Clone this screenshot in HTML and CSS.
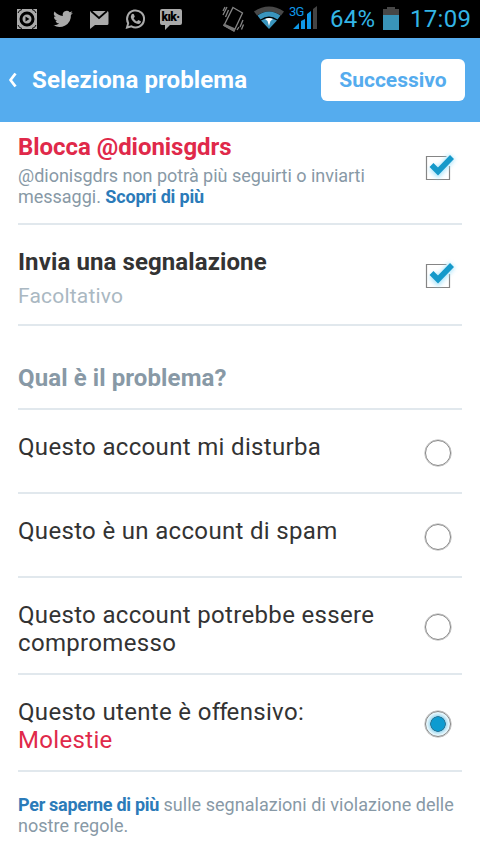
FILE: index.html
```html
<!DOCTYPE html>
<html lang="it">
<head>
<meta charset="utf-8">
<title>Seleziona problema</title>
<link rel="stylesheet" href="styles.css">
</head>
<body>
<div class="status">
  <svg class="notices" width="190" height="38" viewBox="0 0 190 38">
    <path fill="#aaa" d="M17 9h20v20H17z"/>
    <circle cx="27" cy="19" r="9" fill="#aaa"/>
    <circle cx="27" cy="19" r="6" fill="none" stroke="#000" stroke-width="3"/>
    <path fill="#000" d="M25.500 16.500l4 2.500-4 2.500z"/>
    <path fill="none" stroke="#000" stroke-width="1" d="M18 13q1-3 4-3.500M32 9.500q3 .5 4 3.500M18 25q1 3 4 3.500M32 28.500q3-.5 4-3.500"/>
    <path fill="#aaa" transform="translate(53.500 9) scale(.82)" d="M23.600 4.600a9.800 9.800 0 0 1-2.800.8 4.900 4.900 0 0 0 2.100-2.700 9.600 9.600 0 0 1-3.100 1.200 4.900 4.900 0 0 0-8.400 4.500A13.900 13.900 0 0 1 1.300 3.200a4.900 4.900 0 0 0 1.500 6.600 4.900 4.900 0 0 1-2.200-.6 4.900 4.900 0 0 0 3.900 4.900 4.900 4.900 0 0 1-2.200.1 4.900 4.900 0 0 0 4.600 3.400A9.900 9.900 0 0 1-.3 19.600a13.900 13.900 0 0 0 21.500-12.400 10 10 0 0 0 2.400-2.600z"/>
    <path fill="#aaa" d="M91 11h16q1.500 0 1.500 1.500v11q0 1.500-1.500 1.500H95l-5 4V12q0-1 1-1z"/>
    <path fill="none" stroke="#000" stroke-width="1.700" d="M91 11l8 7 8-7"/>
    <path fill="none" stroke="#aaa" stroke-width="2" d="M127 27.500l1.200-4.300a8.500 8.500 0 1 1 3.300 3.200z"/>
    <path fill="#aaa" d="M131.500 14.600q1.500-1.500 2.500 0l.8 2.200-1.200 1.400q1.200 2.300 3.300 3.200l1.400-1.500 2.600 1.300q.2 2.400-2.700 2.700-3.900 0-6.700-4.600-1.300-2.700 0-4.700z"/>
    <path fill="#aaa" d="M162 9h18q2 0 2 2v12q0 2-2 2h-10l-5 5v-5h-3q-2 0-2-2V11q0-2 2-2z"/>
    <text class="kik" x="161.500" y="21">kık·</text>
  </svg>
  <svg class="system" width="112" height="38" viewBox="218 0 112 38">
    <g fill="none" stroke="#858585" stroke-width="1.300">
      <path d="M233 7.500l9.500 5.500-8.500 18-10-5.500z"/>
      <path d="M223 15l4-8M225.500 17l3-7M240 27l3-7M241.500 29.500l2-5M223 11l2-4M237 30l2-3"/>
    </g>
    <path fill="#777" d="M224 23.500l11.500 5-1.500 3-11-6z"/>
    <path fill="#484848" d="M254 11.500q15-10 30 0l-3 4q-12-8-24 0z"/>
    <path fill="#3994bd" d="M257.500 15.500q11.500-8 23 0l-3 4q-8.500-6-17 0z"/>
    <path fill="#3994bd" d="M261 20.500q8-5 16 0L269 29z"/>
    <path fill="#fff" d="M265 19q4-2 8 0l-2.500 2-1.500 5-1.500-5z"/>
    <text class="net" x="289" y="16">3G</text>
    <path fill="#0f98e6" d="M293 29l6-6v6zM301 21l4-2v10h-4zM307 14l4-3v18h-4z"/>
    <path fill="#444" d="M313 9l4-3v23h-4z"/>
  </svg>
  <span class="pct">64%</span>
  <svg class="battery" width="16" height="24" viewBox="0 0 16 24"><path fill="#474747" d="M4 0h8v2h4v6H0V2h4z"/><path fill="#3994b9" d="M0 8h16v15H0z"/></svg>
  <span class="clock">17:09</span>
</div>
<header class="bar">
  <svg class="back" width="10" height="16" viewBox="0 0 10 16"><path d="M8.500 1.500L3.500 8L8.500 14.500" fill="none" stroke="#fff" stroke-width="2.800" stroke-linejoin="round"/></svg>
  <h1>Seleziona problema</h1>
  <button class="next">Successivo</button>
</header>
<main>
  <section class="row block">
    <div class="text">
      <h2 class="red">Blocca @dionisgdrs</h2>
      <p class="note">@dionisgdrs non potrà più seguirti o inviarti<br>messaggi. <a>Scopri di più</a></p>
    </div>
    <svg class="check" width="36" height="36" viewBox="0 0 36 36"><defs><filter id="g" x="-50%" y="-50%" width="200%" height="200%"><feGaussianBlur stdDeviation="2"/></filter></defs><path d="M22.500 8.500h-20v23h23V18" fill="none" stroke="#858585" stroke-width="1.200"/><path d="M8 19l6 6L28 9" fill="none" stroke="#9ce0fa" stroke-width="8" opacity=".8" filter="url(#g)"/><path d="M7.500 17l6.500 6.500L28 9" fill="none" stroke="#1599ca" stroke-width="5.500"/></svg>
  </section>
  <section class="row report">
    <div class="text">
      <h2>Invia una segnalazione</h2>
      <p class="optional">Facoltativo</p>
    </div>
    <svg class="check" width="36" height="36" viewBox="0 0 36 36"><path d="M22.500 8.500h-20v23h23V18" fill="none" stroke="#858585" stroke-width="1.200"/><path d="M8 19l6 6L28 9" fill="none" stroke="#9ce0fa" stroke-width="8" opacity=".8" filter="url(#g)"/><path d="M7.500 17l6.500 6.500L28 9" fill="none" stroke="#1599ca" stroke-width="5.500"/></svg>
  </section>
  <section class="row heading"><h2>Qual è il problema?</h2></section>
  <section class="row option"><p>Questo account mi disturba</p><i class="radio"></i></section>
  <section class="row option"><p>Questo è un account di spam</p><i class="radio"></i></section>
  <section class="row option tall"><p>Questo account potrebbe essere<br>compromesso</p><i class="radio"></i></section>
  <section class="row option tall"><p>Questo utente è o<span class="tight">ff</span>ensivo:<br><span class="red">Molestie</span></p><i class="radio on"></i></section>
  <p class="note foot"><a>Per saperne di più</a> sulle segnalazioni di violazione delle<br>nostre regole.</p>
</main>
</body>
</html>
```
FILE: styles.css
```css
* { box-sizing: border-box; }
body { margin: 0; width: 480px; height: 854px; overflow: hidden; background: #fff; color: #333; font-family: Roboto, "Liberation Sans", sans-serif; }
h1, h2, p { margin: 0; }
.status { height: 38px; background: #000; display: flex; color: #33b5e5; font-size: 24px; line-height: 39px; }
.notices { flex: none; margin-right: 28px; }
.kik { font: 900 12px Roboto, sans-serif; fill: #000; letter-spacing: -.6px; }
.system { flex: none; }
.net { font: 13px Roboto, sans-serif; fill: #0f98e6; letter-spacing: -.8px; }
.pct { width: 53px; letter-spacing: .2px; }
.battery { flex: none; margin: 7px 11px 0 0; }
.clock { letter-spacing: .3px; }
.bar { height: 84px; background: #55acee; display: flex; align-items: center; padding: 0 15px 0 7px; }
.back { margin-right: 15px; }
h1, h2 { font-size: 24px; line-height: 28px; font-weight: 700; white-space: nowrap; letter-spacing: .1px; }
h1 { color: #fff; flex: 1; }
.block h2 { letter-spacing: -.05px; }
.next { width: 144px; height: 42px; border: 0; padding: 0; border-radius: 6px; background: #fff; color: #55acee; font: 700 21px/42px Roboto, sans-serif; }
main { padding: 0 18px; }
.row { display: flex; justify-content: space-between; border-bottom: 2px solid #e1e8ed; }
.block { height: 103px; padding-top: 11px; }
.report { height: 101px; padding-top: 23px; }
.heading { height: 84px; padding-top: 38px; color: #8899a6; }
.option { height: 84px; padding-top: 23px; font-size: 24px; line-height: 28px; white-space: nowrap; letter-spacing: .33px; }
.option.tall { height: 97px; }
.tight { letter-spacing: -.9px; }
.red { color: #e0294a; }
.note { font-size: 18px; line-height: 21px; color: #8899a6; white-space: nowrap; margin-top: 4px; letter-spacing: -.02px; }
.note a { color: #2b7bb9; font-weight: 700; letter-spacing: -.18px; }
.optional { margin-top: 8px; font-size: 21px; line-height: 24px; color: #aab8c2; letter-spacing: .2px; }
.check { flex: none; margin: 15px 2px 0 0; overflow: visible; }
.report .check { margin-top: 8px; }
.radio { flex: none; width: 26px; height: 26px; border: 1px solid #858585; box-shadow: 0 0 0 .5px #aaa; border-radius: 50%; margin: 7px 11px 0 0; }
.option.tall .radio { margin-top: 13px; }
.radio.on { background: radial-gradient(circle, #0d9bd0 0 6.500px, #28799c 7px 7.500px, #a8dcf1 8px, #e5f6fc 11px); }
.note.foot { margin-top: 22px; letter-spacing: .03px; }
.note.foot a { letter-spacing: -.29px; }
```
